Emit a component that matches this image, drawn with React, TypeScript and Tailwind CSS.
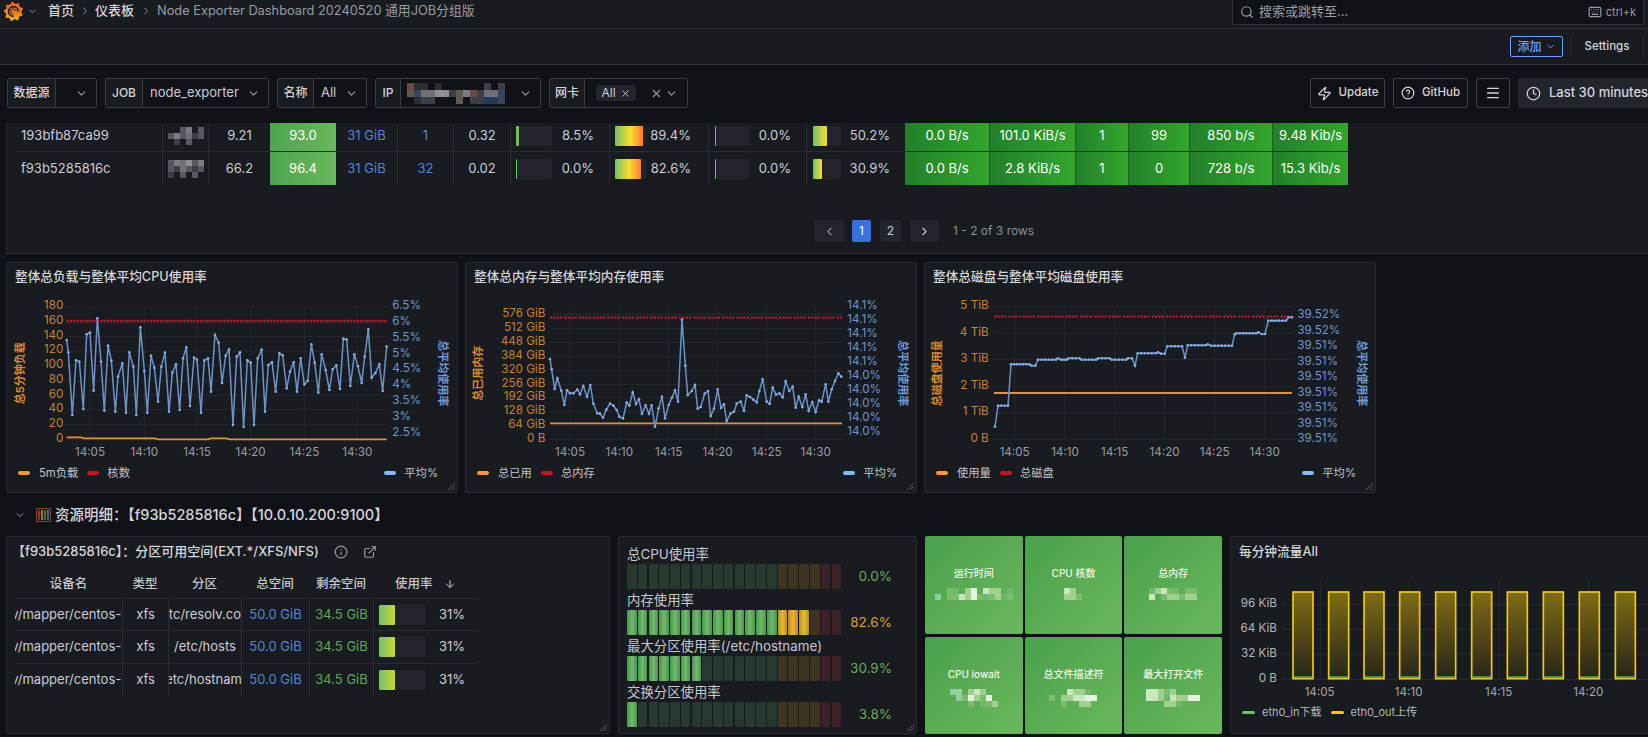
import React from 'react';
import { ArrowDown, ChevronDown, ChevronLeft, ChevronRight, CircleHelp, Clock, ExternalLink, Info, Keyboard, Menu, Search, X, Zap } from 'lucide-react';

type Pt = [number, number];

// 打码区域的色块
const palette: Record<string, string> = {
  r: '#6a4a48', d: '#2b2e34', g: '#6e7175', l: '#8f9090', n: '#1f3a5c', m: '#34475f', t: '#5f5a55',
  h: '#55585e', i: '#7a7c80', j: '#3c3f45',
  a: '#7dbb6f', b: '#9fd08f', c: '#c9e6bd', e: '#e6f3e0', f: '#8fcfa8', k: '#6fb86a',
};

function Mosaic({ rows, block = 6 }: { rows: string[]; block?: number }) {
  const cols = Math.max(...rows.map(r => r.length));
  return (
    <svg width={cols * block} height={rows.length * block} shapeRendering="crispEdges" className="shrink-0">
      {rows.map((row, y) =>
        row.split('').map((ch, x) =>
          ch === '.' ? null : <rect key={x + '-' + y} x={x * block} y={y * block} width={block} height={block} fill={palette[ch]} />
        )
      )}
    </svg>
  );
}

function GrafanaLogo() {
  const pts: string[] = [];
  for (let i = 0; i < 18; i++) {
    const r = i % 2 === 0 ? 11.5 : 8.8;
    const a = (i / 18) * Math.PI * 2 - 0.3;
    pts.push(`${(12 + r * Math.cos(a)).toFixed(1)},${(12 + r * Math.sin(a)).toFixed(1)}`);
  }
  return (
    <svg width="21" height="21" viewBox="0 0 24 24" className="shrink-0">
      <defs>
        <linearGradient id="logoGrad" x1="0" y1="0" x2="0" y2="1">
          <stop offset="0" stopColor="#f05a28" />
          <stop offset="0.7" stopColor="#f58a1f" />
          <stop offset="1" stopColor="#fbca0a" />
        </linearGradient>
      </defs>
      <polygon points={pts.join(' ')} fill="url(#logoGrad)" />
      <path d="M17.5 12a5.5 5.5 0 1 0-5.5 5.5" fill="none" stroke="#181b1f" strokeWidth="1.9" />
      <path d="M15 12a3 3 0 1 0-3 3" fill="none" stroke="#181b1f" strokeWidth="1" />
    </svg>
  );
}

function ResizeHandle() {
  return (
    <svg width="10" height="10" viewBox="0 0 10 10" className="absolute bottom-[1px] right-[1px]">
      <path d="M9 2 2 9M9 5 5 9M9 8 8 9" stroke="#55585e" strokeWidth="1" />
    </svg>
  );
}

function VarGroup({ label, labelW, valueW, children }: { label: string; labelW: string; valueW: string; children: React.ReactNode }) {
  return (
    <div className="flex h-[30px] shrink-0">
      <div className={`${labelW} flex items-center justify-center rounded-l-[2px] border border-[#3a3c42] bg-[#181b1f] text-[12px] font-medium text-[#d5d6da]`}>{label}</div>
      <div className={`${valueW} -ml-px flex items-center rounded-r-[2px] border border-[#3a3c42] bg-[#111217] text-[13px] text-[#ccccdc]`}>{children}</div>
    </div>
  );
}

function ToolButton({ w, children }: { w: string; children: React.ReactNode }) {
  return (
    <div className={`${w} flex h-[30px] shrink-0 items-center justify-center gap-[7px] rounded-[2px] border border-[#3f4147] bg-[#111217] text-[11.5px] font-medium text-[#d5d6da]`}>
      {children}
    </div>
  );
}

const colWidths = 'grid-cols-[147px_46px_62px_66px_61px_56px_57px_99px_99px_98px_99px_84px_86px_53px_61px_83px_76px]';

const hostRows = [
  {
    name: '193bfb87ca99', h: 'h-[28px] pb-[3px]',
    blur: ['..hi.h', 'hihgjh', '.j.h..'],
    load: '9.21', cpu: '93.0', mem: '31 GiB', cores: '1', iow: '0.32',
    gauges: [8.5, 89.4, 0.0, 50.2],
    net: ['0.0 B/s', '101.0 KiB/s', '1', '99', '850 b/s', '9.48 Kib/s'],
  },
  {
    name: 'f93b5285816c', h: 'h-[33px]',
    blur: ['higlhi', 'hjghjh', 'j.h.h.'],
    load: '66.2', cpu: '96.4', mem: '31 GiB', cores: '32', iow: '0.02',
    gauges: [0.0, 82.6, 0.0, 30.9],
    net: ['0.0 B/s', '2.8 KiB/s', '1', '0', '728 b/s', '15.3 Kib/s'],
  },
];

const gaugeStyles = [
  { box: 36, pl: 'pl-[5px]', pr: 'pr-[15px]', fill: 'bg-[#73bf69]' },
  { box: 31, pl: 'pl-[5px]', pr: 'pr-[17px]', fill: 'bg-[linear-gradient(90deg,#73bf69,#fade2a_55%,#ff7a3a)]' },
  { box: 35, pl: 'pl-[6px]', pr: 'pr-[15px]', fill: 'bg-[#73bf69]' },
  { box: 28, pl: 'pl-[6px]', pr: 'pr-[15px]', fill: 'bg-[linear-gradient(90deg,#73bf69,#fade2a)]' },
];

function HostTable() {
  return (
    <div className="ml-[8px]">
      {hostRows.map((row, ri) => (
        <div key={row.name} className={`grid ${colWidths} w-[1333px] ${ri === 0 ? 'border-b border-[#2a2c31]' : ''} text-[13px] text-[#ccccdc]`}>
          <div className={`${row.h} flex items-center pl-[6px]`}>{row.name}</div>
          <div className={`${row.h} flex items-center justify-center border-l border-[#2a2c31]`}>
            <Mosaic rows={row.blur} block={6} />
          </div>
          <div className={`${row.h} flex items-center justify-center border-l border-[#2a2c31]`}>{row.load}</div>
          <div className={`${row.h} flex items-center justify-center bg-gradient-to-r from-[#4ea54f] to-[#68b75d] text-white`}>{row.cpu}</div>
          <div className={`${row.h} flex items-center justify-center text-[#4f87dc]`}>{row.mem}</div>
          <div className={`${row.h} flex items-center justify-center border-l border-[#2a2c31] text-[#4f87dc]`}>{row.cores}</div>
          <div className={`${row.h} flex items-center justify-center border-l border-[#2a2c31]`}>{row.iow}</div>
          {row.gauges.map((v, i) => {
            const s = gaugeStyles[i];
            return (
              <div key={i} className={`${row.h} flex items-center justify-between border-l border-[#2a2c31] ${s.pl} ${s.pr}`}>
                <div className="h-[20px] rounded-[2px] bg-[#22252b]" style={{ width: s.box }}>
                  <div className={`h-full rounded-[1px] ${s.fill}`} style={{ width: Math.max(1, (s.box * v) / 100) }} />
                </div>
                <span>{v.toFixed(1)}%</span>
              </div>
            );
          })}
          {row.net.map((v, i) => (
            <div key={i} className={`${row.h} flex items-center justify-center whitespace-nowrap bg-gradient-to-r from-[#23802a] to-[#32a62c] text-white ${i > 0 ? 'border-l border-[#1c5f22]' : ''}`}>{v}</div>
          ))}
        </div>
      ))}
    </div>
  );
}

type ChartDef = {
  id: string;
  title: string;
  vx: number;
  plot: [number, number];
  left: [string, number][];
  leftX: number;
  right: [string, number][];
  rightX: number;
  times: [string, number][];
  red: number;
  redDash: string;
  orange: Pt[];
  blue: Pt[];
  leftTitle: [string, number];
  rightTitle: [string, number];
  legend: [string, string];
  legendRight: string;
};

// 步进线补点
function densify(pts: Pt[], step: number): Pt[] {
  const out: Pt[] = [];
  for (let i = 0; i < pts.length - 1; i++) {
    const [x0, y0] = pts[i];
    const [x1, y1] = pts[i + 1];
    const n = Math.max(1, Math.round((x1 - x0) / step));
    for (let k = 0; k < n; k++) out.push([x0 + ((x1 - x0) * k) / n, y0 + ((y1 - y0) * k) / n]);
  }
  out.push(pts[pts.length - 1]);
  return out;
}

const cpuLine: Pt[] = [[200,285],[205,322],[217,510],[228,346],[238,350],[250,492],[260,268],[270,263],[281,437],[292,220],[303,350],[313,497],[324,302],[334,347],[346,500],[354,395],[367,355],[378,503],[388,322],[400,365],[409,510],[421,247],[433,378],[442,503],[453,332],[463,368],[474,470],[484,365],[495,323],[507,500],[517,383],[528,358],[539,495],[549,340],[559,307],[570,483],[582,338],[591,344],[603,503],[613,346],[624,340],[633,440],[645,270],[656,293],[666,414],[677,332],[687,314],[699,540],[710,335],[720,322],[731,546],[742,346],[752,353],[762,540],[773,340],[785,314],[795,500],[805,360],[816,352],[827,440],[838,325],[848,331],[860,430],[870,380],[881,352],[891,440],[902,340],[913,418],[923,408],[934,298],[944,353],[955,443],[965,328],[977,375],[988,435],[998,373],[1009,361],[1020,432],[1030,281],[1040,284],[1051,423],[1063,328],[1074,364],[1085,414],[1094,335],[1105,253],[1115,398],[1126,384],[1138,358],[1148,438],[1160,305]];

const memLine: Pt[] = [[330,342],[335,373],[344,432],[352,400],[364,437],[373,480],[381,436],[390,445],[400,445],[412,434],[420,448],[430,423],[441,455],[451,420],[460,476],[472,505],[480,506],[489,518],[499,494],[510,476],[520,482],[530,495],[538,515],[549,520],[560,473],[568,482],[578,442],[588,477],[597,463],[606,506],[617,481],[627,506],[635,481],[645,545],[656,490],[666,455],[675,520],[686,480],[696,458],[705,436],[714,470],[726,224],[736,362],[743,450],[755,438],[765,420],[773,491],[782,486],[794,446],[804,438],[812,513],[822,491],[833,433],[843,489],[852,478],[860,528],[872,505],[882,500],[890,476],[902,470],[912,497],[920,451],[930,456],[940,464],[950,472],[958,438],[968,403],[980,470],[989,477],[998,428],[1008,449],[1018,445],[1028,457],[1037,409],[1048,438],[1058,425],[1067,488],[1076,455],[1087,486],[1097,448],[1106,497],[1117,471],[1127,501],[1137,466],[1145,470],[1157,418],[1165,470],[1175,433],[1185,408],[1195,385],[1204,395]];

const diskLine: Pt[] = densify([[357,545],[366,482],[396,482],[405,358],[460,358],[467,362],[478,362],[486,344],[540,344],[546,340],[555,344],[572,344],[578,340],[610,340],[617,344],[660,344],[667,340],[700,340],[707,344],[750,344],[756,340],[768,340],[777,362],[785,325],[838,325],[846,322],[855,326],[866,326],[874,304],[918,304],[927,338],[935,301],[988,301],[995,298],[1005,302],[1068,302],[1076,268],[1082,265],[1140,265],[1147,262],[1157,267],[1167,267],[1177,227],[1230,227],[1237,217],[1248,217]], 10);

const groupedDash = '7 3 7 3 7 3 7 6';

const charts: ChartDef[] = [
  {
    id: 'cpu', title: '整体总负载与整体平均CPU使用率', vx: 21, plot: [200, 1165],
    left: [['180',183],['160',228],['140',272],['120',315],['100',358],['80',403],['60',448],['40',491],['20',536],['0',581]], leftX: 190,
    right: [['6.5%',182],['6%',230],['5.5%',278],['5%',326],['4.5%',371],['4%',419],['3.5%',467],['3%',515],['2.5%',563]], rightX: 1177,
    times: [['14:05',270],['14:10',433],['14:15',591],['14:20',752],['14:25',913],['14:30',1072]],
    red: 228, redDash: '7 3',
    orange: [[200,577],[245,577],[250,580],[465,580],[475,583],[625,583],[632,580],[680,580],[688,583],[1160,583]],
    blue: cpuLine, leftTitle: ['总5分钟负载', 62], rightTitle: ['总平均使用率', 1325],
    legend: ['5m负载', '核数'], legendRight: '平均%',
  },
  {
    id: 'mem', title: '整体总内存与整体平均内存使用率', vx: 78, plot: [330, 1210],
    left: [['576 GiB',205],['512 GiB',247],['448 GiB',289],['384 GiB',331],['320 GiB',373],['256 GiB',415],['192 GiB',455],['128 GiB',497],['64 GiB',538],['0 B',580]], leftX: 316,
    right: [['14.1%',182],['14.1%',224],['14.1%',266],['14.1%',308],['14.1%',350],['14.0%',392],['14.0%',434],['14.0%',476],['14.0%',518],['14.0%',560]], rightX: 1222,
    times: [['14:05',390],['14:10',538],['14:15',686],['14:20',833],['14:25',980],['14:30',1127]],
    red: 218, redDash: groupedDash,
    orange: [[330,535],[1206,535]],
    blue: memLine, leftTitle: ['总已用内存', 118], rightTitle: ['总平均使用率', 1386],
    legend: ['总已用', '总内存'], legendRight: '平均%',
  },
  {
    id: 'disk', title: '整体总磁盘与整体平均磁盘使用率', vx: 147, plot: [354, 1252],
    left: [['5 TiB',181],['4 TiB',262],['3 TiB',341],['2 TiB',421],['1 TiB',500],['0 B',580]], leftX: 338,
    right: [['39.52%',208],['39.52%',256],['39.51%',302],['39.51%',349],['39.51%',395],['39.51%',442],['39.51%',488],['39.51%',536],['39.51%',582]], rightX: 1264,
    times: [['14:05',416],['14:10',567],['14:15',716],['14:20',866],['14:25',1016],['14:30',1166]],
    red: 215, redDash: groupedDash,
    orange: [[354,444],[1248,444]],
    blue: diskLine, leftTitle: ['总磁盘使用量', 186], rightTitle: ['总平均使用率', 1455],
    legend: ['使用量', '总磁盘'], legendRight: '平均%',
  },
];

function Swatch({ color }: { color: string }) {
  return <span className={`${color} h-[4px] w-[12px] shrink-0 rounded-full`} />;
}

function ChartPanel({ c }: { c: ChartDef }) {
  const grid = c.left.map(t => t[1] + 3);
  return (
    <div className="relative h-[231px] w-[452px] shrink-0 rounded-[2px] border border-[#2a2c31] bg-[#181b1f]">
      <div className="flex h-[32px] items-center pb-[4px] pl-[8px] text-[12.7px] font-medium text-[#d5d6da]">{c.title}</div>
      <svg width="450" height="168" viewBox={`${c.vx} 150 1350 504`} className="block">
        {grid.map(y => <line key={y} x1={c.plot[0]} x2={c.plot[1]} y1={y} y2={y} stroke="#26292e" strokeWidth="3" />)}
        {c.times.map(t => <line key={t[0]} x1={t[1]} x2={t[1]} y1={183} y2={585} stroke="#26292e" strokeWidth="3" />)}
        {c.left.map(t => (
          <text key={t[0]} x={c.leftX} y={t[1]} textAnchor="end" dominantBaseline="middle" fontSize="35" fill="#c7842f">{t[0]}</text>
        ))}
        {c.right.map((t, i) => (
          <text key={i} x={c.rightX} y={t[1]} dominantBaseline="middle" fontSize="35" fill="#7096cc">{t[0]}</text>
        ))}
        {c.times.map(t => (
          <text key={t[0]} x={t[1]} y={622} textAnchor="middle" dominantBaseline="middle" fontSize="35" fill="#9a9ca2">{t[0]}</text>
        ))}
        <text transform={`translate(${c.leftTitle[1]} 385) rotate(-90)`} textAnchor="middle" dominantBaseline="middle" fontSize="33" fontWeight="700" fill="#d98a2b">{c.leftTitle[0]}</text>
        <text transform={`translate(${c.rightTitle[1]} 385) rotate(90)`} textAnchor="middle" dominantBaseline="middle" fontSize="33" fontWeight="700" fill="#6d9ad8">{c.rightTitle[0]}</text>
        <line x1={c.plot[0]} x2={c.plot[1] - 2} y1={c.red} y2={c.red} stroke="#b8152c" strokeWidth="7" strokeDasharray={c.redDash} />
        <polyline points={c.orange.map(p => p.join(',')).join(' ')} fill="none" stroke="#e8912d" strokeWidth="5.5" />
        <polyline points={c.blue.map(p => p.join(',')).join(' ')} fill="none" stroke="#6b93c8" strokeWidth="4.5" />
        {c.blue.map((p, i) => <circle key={i} cx={p[0]} cy={p[1]} r="4" fill="#86aee6" />)}
      </svg>
      <div className="flex h-[20px] items-center pl-[11px] pr-[19px] text-[11.3px] text-[#c2c4c9]">
        <Swatch color="bg-[#ff9830]" />
        <span className="ml-[9px]">{c.legend[0]}</span>
        <span className="ml-[9px] flex"><Swatch color="bg-[#c4162a]" /></span>
        <span className="ml-[8px]">{c.legend[1]}</span>
        <span className="ml-auto flex"><Swatch color="bg-[#8ab8ff]" /></span>
        <span className="ml-[8px]">{c.legendRight}</span>
      </div>
      <ResizeHandle />
    </div>
  );
}

const diskCols = 'grid-cols-[107px_46px_73px_68px_64px_104px]';
const diskHeader = ['设备名', '类型', '分区', '总空间', '剩余空间'];
const diskRows = [
  { dev: '/dev/mapper/centos-root', mount: '/etc/resolv.conf', h: 'h-[31px]' },
  { dev: '/dev/mapper/centos-root', mount: '/etc/hosts', h: 'h-[32px]' },
  { dev: '/dev/mapper/centos-root', mount: '/etc/hostname', h: 'h-[32px]' },
];

function DiskPanel() {
  return (
    <div className="relative h-[198px] w-[604px] shrink-0 rounded-[2px] border border-[#2a2c31] bg-[#181b1f]">
      <div className="flex h-[33px] items-center pb-[4px] pl-[5px] text-[13px] font-medium text-[#d5d6da]">
        <span>【f93b5285816c】：分区可用空间(EXT.*/XFS/NFS)</span>
        <Info size={14} className="ml-[15px] text-[#9a9ca3]" />
        <ExternalLink size={14} className="ml-[15px] text-[#9a9ca3]" />
      </div>
      <div className="ml-[8px] w-[462px]">
        <div className={`grid ${diskCols} h-[28px] items-center text-[12.5px] font-medium text-[#c6c8ce]`}>
          {diskHeader.map(h => <div key={h} className="text-center">{h}</div>)}
          <div className="flex items-center pl-[22px]">
            <span>使用率</span>
            <ArrowDown size={12} className="ml-[11px]" />
          </div>
        </div>
        {diskRows.map((r, i) => (
          <div key={i} className={`grid ${diskCols} border-t border-[#2a2c31] text-[13px] text-[#ccccdc]`}>
            <div className={`${r.h} flex items-center justify-center overflow-hidden whitespace-nowrap`}>{r.dev}</div>
            <div className={`${r.h} flex items-center justify-center border-l border-[#2a2c31]`}>xfs</div>
            <div className={`${r.h} flex items-center justify-center overflow-hidden whitespace-nowrap border-l border-[#2a2c31]`}>{r.mount}</div>
            <div className={`${r.h} flex items-center justify-center border-l border-[#2a2c31] text-[#4f87dc]`}>50.0 GiB</div>
            <div className={`${r.h} flex items-center justify-center border-l border-[#2a2c31] text-[#62a85a]`}>34.5 GiB</div>
            <div className={`${r.h} flex items-center border-l border-[#2a2c31] pl-[5px]`}>
              <div className="h-[20px] w-[47px] rounded-[2px] bg-[#22252b]">
                <div className="h-full w-[16px] rounded-[1px] bg-[linear-gradient(90deg,#73bf69,#c8d83a)]" />
              </div>
              <span className="ml-[13px]">31%</span>
            </div>
          </div>
        ))}
      </div>
      <ResizeHandle />
    </div>
  );
}

const usage = [
  { label: '总CPU使用率', value: '0.0%', green: 0, yellow: 0, tone: 'text-[#6aa85f]' },
  { label: '内存使用率', value: '82.6%', green: 14, yellow: 3, tone: 'text-[#d9a52b]' },
  { label: '最大分区使用率(/etc/hostname)', value: '30.9%', green: 7, yellow: 0, tone: 'text-[#6aa85f]' },
  { label: '交换分区使用率', value: '3.8%', green: 1, yellow: 0, tone: 'text-[#6aa85f]' },
];

function cellClass(i: number, green: number, yellow: number) {
  if (i < 14) {
    return i < green ? 'bg-[linear-gradient(90deg,#4a9450,#6fbb68_50%,#4a9450)]' : 'bg-[#27392e]';
  }
  if (i < 18) {
    return i - 14 < yellow ? 'bg-[linear-gradient(90deg,#b98d1f,#e8b82e_50%,#b98d1f)]' : 'bg-[#3e3420]';
  }
  return 'bg-[#3c2128]';
}

function UsagePanel() {
  return (
    <div className="relative h-[198px] w-[299px] shrink-0 rounded-[2px] border border-[#2a2c31] bg-[#181b1f] pl-[8px] pt-[7px]">
      {usage.map(u => (
        <div key={u.label} className="h-[46px]">
          <div className="h-[20px] whitespace-nowrap text-[13.4px] leading-[20px] text-[#c6c8ce]">{u.label}</div>
          <div className="flex h-[25px] items-center">
            <div className="flex h-[25px] w-[214px] gap-[1.2px]">
              {Array.from({ length: 20 }).map((_, i) => (
                <div key={i} className={`flex-1 rounded-[1px] ${cellClass(i, u.green, u.yellow)}`} />
              ))}
            </div>
            <div className={`w-[51px] text-right text-[13.5px] ${u.tone}`}>{u.value}</div>
          </div>
        </div>
      ))}
      <ResizeHandle />
    </div>
  );
}

const tiles = [
  { label: '运行时间', blur: ['..ak.be.cbb.k', 'f.aacbeakabka'] },
  { label: 'CPU 核数', blur: ['cb.', 'bba'] },
  { label: '总内存', blur: ['kbcak.aa', 'c.abbabb'] },
  { label: 'CPU iowait', blur: ['fb.bcb..', '.faebae.', '...a.kab'] },
  { label: '总文件描述符', blur: ['...cbbk.', 'a.bbccee', '..a..bb.'] },
  { label: '最大打开文件', blur: ['ccbab....', 'ccbkcbbee', '...bbk...'] },
];

function StatTiles() {
  return (
    <div className="grid h-[198px] w-[297px] shrink-0 grid-cols-3 grid-rows-2 gap-x-[2px] gap-y-[3px]">
      {tiles.map(t => (
        <div key={t.label} className="flex flex-col items-center rounded-[2px] bg-gradient-to-br from-[#4aa04c] to-[#6ab85c] pt-[30px]">
          <div className="h-[14px] text-[10px] font-medium leading-[14px] text-[#eef7ea]">{t.label}</div>
          <div className="mt-[8px]">
            <Mosaic rows={t.blur} block={6} />
          </div>
        </div>
      ))}
    </div>
  );
}

const barXs = [382, 489, 595, 702, 810, 918, 1025, 1133, 1241, 1349, 1456];

function TrafficPanel() {
  return (
    <div className="h-[198px] w-[430px] shrink-0 rounded-[2px] border border-[#2a2c31] bg-[#181b1f]">
      <div className="flex h-[33px] items-center pb-[4px] pl-[8px] text-[12.7px] font-medium text-[#d5d6da]">每分钟流量All</div>
      <svg width="428" height="132" viewBox="198 195 1284 396" className="block">
        <defs>
          <linearGradient id="barFill" x1="0" y1="0" x2="0" y2="1">
            <stop offset="0" stopColor="#806c14" />
            <stop offset="1" stopColor="#26251a" />
          </linearGradient>
        </defs>
        {[298, 373, 448, 523].map(y => <line key={y} x1={350} x2={1482} y1={y} y2={y} stroke="#2a2d33" strokeWidth="3" />)}
        {[466, 733, 1002, 1271].map(x => <line key={x} x1={x} x2={x} y1={225} y2={525} stroke="#2a2d33" strokeWidth="3" />)}
        {([['96 KiB', 295], ['64 KiB', 370], ['32 KiB', 445], ['0 B', 520]] as [string, number][]).map(t => (
          <text key={t[0]} x={336} y={t[1]} textAnchor="end" dominantBaseline="middle" fontSize="35" fill="#b4b6bc">{t[0]}</text>
        ))}
        {([['14:05', 464], ['14:10', 731], ['14:15', 1001], ['14:20', 1270]] as [string, number][]).map(t => (
          <text key={t[0]} x={t[1]} y={562} textAnchor="middle" dominantBaseline="middle" fontSize="35" fill="#a4a6ac">{t[0]}</text>
        ))}
        {barXs.map(x => (
          <g key={x}>
            <rect x={x + 2} y={261} width={60} height={260} fill="url(#barFill)" stroke="#eccd0c" strokeWidth="5" />
            <line x1={x + 4} x2={x + 60} y1={516} y2={516} stroke="#73bf69" strokeWidth="4" />
          </g>
        ))}
      </svg>
      <div className="flex h-[20px] items-center pl-[11px] text-[11px] text-[#b4b6bc]">
        <span className="h-[3px] w-[13px] rounded-full bg-[#73bf69]" />
        <span className="ml-[7px]">eth0_in下载</span>
        <span className="ml-[9px] h-[3px] w-[13px] rounded-full bg-[#f2cc0c]" />
        <span className="ml-[7px]">eth0_out上传</span>
      </div>
    </div>
  );
}

export default function App() {
  return (
    <div className="flex h-[737px] w-[1648px] flex-col overflow-hidden bg-[#111217] font-[Inter,'Noto_Sans_CJK_SC',sans-serif] text-[#ccccdc]">
      {/* 顶部导航 */}
      <div className="flex h-[29px] shrink-0 border-b border-[#2f3136] bg-[#181b1f]">
        <div className="ml-[3px] mt-[1px] flex h-[20px] items-center">
          <GrafanaLogo />
          <ChevronDown size={11} className="ml-[3px] text-[#8e9096]" />
        </div>
        <div className="ml-[10px] flex h-[22px] items-center whitespace-nowrap text-[13px]">
          <span className="font-medium text-[#d5d6da]">首页</span>
          <ChevronRight size={12} className="mx-[4.5px] text-[#8e9096]" />
          <span className="font-medium text-[#d5d6da]">仪表板</span>
          <ChevronRight size={12} className="mx-[5.5px] text-[#8e9096]" />
          <span className="text-[12.8px] text-[#9a9ca3]">Node Exporter Dashboard 20240520 通用JOB分组版</span>
        </div>
        <div className="ml-auto mr-[4px] flex h-[25px] w-[412px] items-center rounded-b-[2px] border border-t-0 border-[#2f3136] bg-[#111217] pl-[7px] pr-[7px] text-[13px] text-[#9a9ca3]">
          <Search size={14} />
          <span className="ml-[5px]">搜索或跳转至...</span>
          <Keyboard size={14} className="ml-auto" />
          <span className="ml-[4px] text-[11px]">ctrl+k</span>
        </div>
      </div>

      {/* 编辑工具条 */}
      <div className="flex h-[36px] shrink-0 items-center justify-end border-b border-[#2f3136] bg-[#181b1f] pr-[4px]">
        <div className="flex h-[21px] w-[53px] items-center justify-center gap-[3px] rounded-[2px] border border-[#6e9fff] text-[12px] font-medium text-[#6e9fff]">
          添加
          <ChevronDown size={11} />
        </div>
        <div className="ml-[7px] h-[20px] w-px bg-[#2f3136]" />
        <div className="w-[72px] text-center text-[11.5px] font-medium text-[#d5d6da]">Settings</div>
        <div className="h-[20px] w-px bg-[#2f3136]" />
      </div>

      {/* 变量栏 */}
      <div className="flex h-[58px] shrink-0 items-center gap-[8px] pb-[2px] pl-[7px]">
        <VarGroup label="数据源" labelW="w-[49px]" valueW="w-[42px]">
          <ChevronDown size={13} className="ml-auto mr-[8px] text-[#9a9ca3]" />
        </VarGroup>
        <VarGroup label="JOB" labelW="w-[38px]" valueW="w-[127px]">
          <span className="ml-[7px]">node_exporter</span>
          <ChevronDown size={13} className="ml-auto mr-[8px] text-[#9a9ca3]" />
        </VarGroup>
        <VarGroup label="名称" labelW="w-[37px]" valueW="w-[54px]">
          <span className="ml-[7px]">All</span>
          <ChevronDown size={13} className="ml-auto mr-[8px] text-[#9a9ca3]" />
        </VarGroup>
        <VarGroup label="IP" labelW="w-[26px]" valueW="w-[141px]">
          <span className="ml-[6px] flex">
            <Mosaic rows={['rdd.d......j.j', 'tmgglljtirjggm', '.djj...t.jjnnm']} block={7} />
          </span>
          <ChevronDown size={13} className="ml-auto mr-[8px] text-[#9a9ca3]" />
        </VarGroup>
        <VarGroup label="网卡" labelW="w-[36px]" valueW="w-[104px]">
          <span className="ml-[11px] flex h-[16px] w-[40px] items-center justify-center gap-[4px] rounded-[2px] bg-[#22252b] text-[12px]">
            All
            <X size={11} />
          </span>
          <X size={13} className="ml-[14px] text-[#9a9ca3]" />
          <ChevronDown size={13} className="ml-[2px] text-[#9a9ca3]" />
        </VarGroup>
        <div className="ml-auto -mr-[30px] flex gap-[8px]">
          <ToolButton w="w-[75px]"><Zap size={15} />Update</ToolButton>
          <ToolButton w="w-[75px]"><CircleHelp size={14} />GitHub</ToolButton>
          <ToolButton w="w-[34px]"><Menu size={16} /></ToolButton>
          <div className="flex h-[30px] w-[160px] shrink-0 items-center rounded-[2px] bg-[#22252b] pl-[8px] text-[13px] font-medium text-[#d5d6da]">
            <Clock size={15} />
            <span className="ml-[8px] whitespace-nowrap">Last 30 minutes</span>
          </div>
        </div>
      </div>

      {/* 主机表格 */}
      <div className="ml-[6px] h-[131px] w-[1660px] shrink-0 border-b border-l border-[#2a2c31] bg-[#181b1f]">
        <HostTable />
        <div className="mt-[35px] flex h-[22px] items-center whitespace-nowrap pl-[807px] text-[12px]">
          <div className="flex h-[22px] w-[30px] items-center justify-center rounded-[2px] bg-[#22252b] text-[#8e9096]"><ChevronLeft size={13} /></div>
          <div className="ml-[8px] flex h-[22px] w-[19px] items-center justify-center rounded-[2px] bg-[#3871dc] text-white">1</div>
          <div className="ml-[9px] flex h-[22px] w-[21px] items-center justify-center rounded-[2px] bg-[#22252b]">2</div>
          <div className="ml-[9px] flex h-[22px] w-[29px] items-center justify-center rounded-[2px] bg-[#22252b]"><ChevronRight size={13} /></div>
          <span className="ml-[14px] text-[#8e9096]">1 - 2 of 3 rows</span>
        </div>
      </div>

      {/* 趋势图 */}
      <div className="ml-[6px] mt-[8px] flex shrink-0 gap-[7px]">
        {charts.map(c => <ChartPanel key={c.id} c={c} />)}
      </div>

      {/* 资源明细 */}
      <div className="flex h-[43px] shrink-0 items-center pl-[14px] text-[14.5px] font-medium text-[#d5d6da]">
        <ChevronDown size={12} className="text-[#9a9ca3]" />
        <svg width="15" height="14" viewBox="0 0 15 14" className="ml-[10px]">
          <rect x="0.5" y="0.5" width="14" height="13" fill="#1b1512" stroke="#7a4a2a" />
          <path d="M3 2v10" stroke="#c43b3b" strokeWidth="1.4" />
          <path d="M6 2v10" stroke="#d9a52b" strokeWidth="1.4" />
          <path d="M9 2v10" stroke="#4aa04c" strokeWidth="1.4" />
          <path d="M12 2v10" stroke="#4f87dc" strokeWidth="1.4" />
          <path d="M1 5h13" stroke="#7a4a2a" />
        </svg>
        <span className="ml-[4px] whitespace-nowrap">资源明细：【f93b5285816c】【10.0.10.200:9100】</span>
      </div>

      <div className="ml-[6px] flex shrink-0 gap-[8px]">
        <DiskPanel />
        <UsagePanel />
        <StatTiles />
        <TrafficPanel />
      </div>
    </div>
  );
}
